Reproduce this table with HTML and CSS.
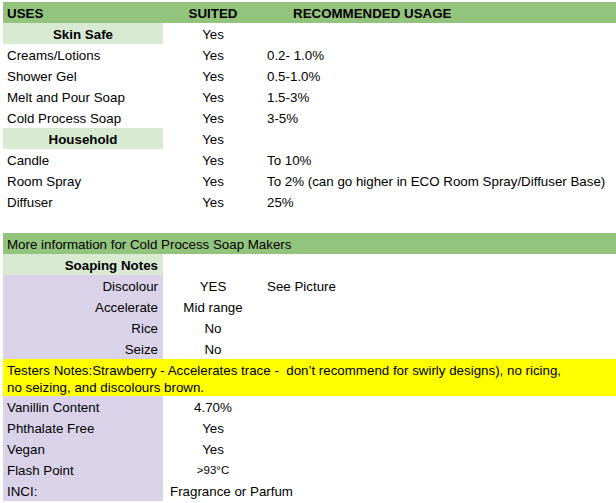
FILE: index.html
```html
<!DOCTYPE html>
<html>
<head>
<meta charset="utf-8">
<link rel="stylesheet" href="styles.css">
</head>
<body>
<div class="sheet">
  <div class="row head">
    <div class="c1 bold">USES</div>
    <div class="c2 bold">SUITED</div>
    <div class="c3 bold rec">RECOMMENDED USAGE</div>
  </div>
  <div class="row">
    <div class="c1 cat bold center">Skin Safe</div>
    <div class="c2">Yes</div>
    <div class="c3"></div>
  </div>
  <div class="row"><div class="c1">Creams/Lotions</div><div class="c2">Yes</div><div class="c3">0.2- 1.0%</div></div>
  <div class="row"><div class="c1">Shower Gel</div><div class="c2">Yes</div><div class="c3">0.5-1.0%</div></div>
  <div class="row"><div class="c1">Melt and Pour Soap</div><div class="c2">Yes</div><div class="c3">1.5-3%</div></div>
  <div class="row"><div class="c1">Cold Process Soap</div><div class="c2">Yes</div><div class="c3">3-5%</div></div>
  <div class="row">
    <div class="c1 cat bold center">Household</div>
    <div class="c2">Yes</div>
    <div class="c3"></div>
  </div>
  <div class="row"><div class="c1">Candle</div><div class="c2">Yes</div><div class="c3">To 10%</div></div>
  <div class="row"><div class="c1">Room Spray</div><div class="c2">Yes</div><div class="c3">To 2% (can go higher in ECO Room Spray/Diffuser Base)</div></div>
  <div class="row"><div class="c1">Diffuser</div><div class="c2">Yes</div><div class="c3">25%</div></div>
  <div class="row blank"></div>
  <div class="row head"><div class="full">More information for Cold Process Soap Makers</div></div>
  <div class="row"><div class="c1 cat bold right">Soaping Notes</div><div class="c2"></div><div class="c3"></div></div>
  <div class="row"><div class="c1 note right">Discolour</div><div class="c2">YES</div><div class="c3">See Picture</div></div>
  <div class="row"><div class="c1 note right">Accelerate</div><div class="c2">Mid range</div><div class="c3"></div></div>
  <div class="row"><div class="c1 note right">Rice</div><div class="c2">No</div><div class="c3"></div></div>
  <div class="row"><div class="c1 note right">Seize</div><div class="c2">No</div><div class="c3"></div></div>
  <div class="testers">Testers Notes:Strawberry - Accelerates trace - &nbsp;don’t recommend for swirly designs), no ricing,<br>no seizing, and discolours brown.</div>
  <div class="row"><div class="c1 note">Vanillin Content</div><div class="c2">4.70%</div><div class="c3"></div></div>
  <div class="row"><div class="c1 note">Phthalate Free</div><div class="c2">Yes</div><div class="c3"></div></div>
  <div class="row"><div class="c1 note">Vegan</div><div class="c2">Yes</div><div class="c3"></div></div>
  <div class="row"><div class="c1 note">Flash Point</div><div class="c2 small">&gt;93°C</div><div class="c3"></div></div>
  <div class="row"><div class="c1 note">INCI:</div><div class="c2 inci">Fragrance or Parfum</div><div class="c3"></div></div>
</div>
</body>
</html>
```

FILE: styles.css
```css
html, body {
  margin: 0;
  padding: 0;
  background: #ffffff;
}
body {
  padding: 2px 0 0 3px;
  font-family: "Liberation Sans", Arial, sans-serif;
  font-size: 13.33px;
  color: #000000;
}
.sheet {
  display: flex;
  flex-direction: column;
}
.row {
  display: grid;
  grid-template-columns: 160px 100px 1fr;
  height: 21px;
  white-space: nowrap;
}
.row > div {
  box-sizing: border-box;
  padding-top: 1px;
  line-height: 21px;
  overflow: hidden;
  height: 21px;
}
.row > .c3 {
  overflow: visible;
}
.head {
  background: #93c47d;
}
.head .full {
  grid-column: 1 / 4;
  padding-left: 4px;
}
.c1 {
  padding-left: 4px;
}
.c2 {
  text-align: center;
}
.c3 {
  padding-left: 4px;
}
.rec {
  padding-left: 30px;
}
.bold {
  font-weight: bold;
}
.cat {
  background: #d9ead3;
}
.center {
  text-align: center;
  padding-left: 0;
}
.right {
  text-align: right;
  padding-left: 0;
  padding-right: 5px;
}
.note {
  background: #d9d2e9;
}
.blank {
  background: #ffffff;
}
.testers {
  background: #ffff00;
  height: 37px;
  box-sizing: border-box;
  padding: 4px 4px 0 4px;
  line-height: 16.5px;
}
.row > .small {
  font-size: 11.5px;
}
.row > .inci {
  text-align: left;
  padding-left: 7px;
  overflow: visible;
}
```
